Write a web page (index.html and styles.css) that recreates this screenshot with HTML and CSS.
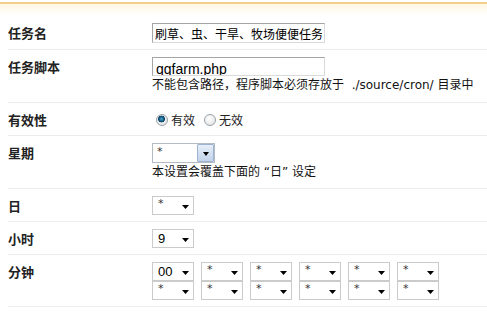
FILE: index.html
```html
<!DOCTYPE html>
<html lang="zh-CN">
<head>
  <meta charset="UTF-8">
  <title>编辑计划任务</title>
  <link rel="stylesheet" href="styles.css">
</head>
<body>

<div class="top"></div>

<form class="cron">
  <div class="row">
    <div class="label">任务名</div>
    <div class="field">
      <input class="text name" type="text" value="刷草、虫、干旱、牧场便便任务">
    </div>
  </div>

  <div class="row">
    <div class="label">任务脚本</div>
    <div class="field">
      <input class="text script" type="text" value="qqfarm.php">
      <div class="hint tall">不能包含路径，程序脚本必须存放于&nbsp; ./source/cron/ 目录中</div>
    </div>
  </div>

  <div class="row">
    <div class="label">有效性</div>
    <div class="field radios">
      <label class="radio"><input type="radio" name="available" checked>有效</label>
      <label class="radio"><input type="radio" name="available">无效</label>
    </div>
  </div>

  <div class="row">
    <div class="label">星期</div>
    <div class="field">
      <span class="combo">
        <select class="star"><option>*</option></select>
        <span class="drop"></span>
      </span>
      <div class="hint">本设置会覆盖下面的 “日” 设定</div>
    </div>
  </div>

  <div class="row">
    <div class="label">日</div>
    <div class="field">
      <select class="sel star"><option>*</option></select>
    </div>
  </div>

  <div class="row">
    <div class="label">小时</div>
    <div class="field">
      <select class="sel"><option>9</option></select>
    </div>
  </div>

  <div class="row">
    <div class="label">分钟</div>
    <div class="field minutes">
      <select class="sel"><option>00</option></select>
      <select class="sel star"><option>*</option></select>
      <select class="sel star"><option>*</option></select>
      <select class="sel star"><option>*</option></select>
      <select class="sel star"><option>*</option></select>
      <select class="sel star"><option>*</option></select>
      <select class="sel star"><option>*</option></select>
      <select class="sel star"><option>*</option></select>
      <select class="sel star"><option>*</option></select>
      <select class="sel star"><option>*</option></select>
      <select class="sel star"><option>*</option></select>
      <select class="sel star"><option>*</option></select>
    </div>
  </div>
</form>

</body>
</html>
```

FILE: styles.css
```css
body {
  margin: 0;
  font-family: "DejaVu Sans", "Noto Sans CJK SC", sans-serif;
  font-size: 12px;
  color: #222;
  background: #fff;
}
.top {
  margin-top: 2px;
  height: 12px;
  border-top: 2px solid #f2cf88;
  background: linear-gradient(#fff7e4, #fff);
}
.cron {
  margin: 0;
}
.row {
  display: flex;
  margin-left: 8px;
  padding: 7px 0 6px;
  border-bottom: 1px solid #ececec;
}
.label {
  width: 144px;
  flex: none;
  font-family: "Noto Sans CJK SC", sans-serif;
  font-weight: bold;
  font-size: 13px;
  line-height: 19px;
  color: #222;
}
.field {
  flex: 1;
}
.text {
  display: block;
  box-sizing: border-box;
  width: 173px;
  height: 20px;
  margin: 0;
  border: 1px solid;
  border-color: #a5a5a5 #dadada #dadada #a5a5a5;
  padding: 0 2px;
  font-family: "Noto Sans CJK SC", sans-serif;
  font-size: 12px;
  color: #000;
  outline: none;
}
.text.script {
  height: 19px;
  padding: 4px 3px 0;
  font-family: "Liberation Sans", sans-serif;
  font-size: 14px;
  line-height: 14px;
}
.hint {
  line-height: 19px;
  color: #111;
}
.hint.tall {
  margin-bottom: 1px;
}
.radios {
  display: flex;
  align-items: center;
  height: 19px;
  padding-left: 4px;
}
.radio {
  display: inline-flex;
  align-items: center;
  margin-right: 9px;
  color: #222;
}
.radio input {
  appearance: none;
  width: 12px;
  height: 12px;
  margin: 0 3px 0 0;
  border: 1px solid #9aa3ab;
  border-radius: 50%;
  background: radial-gradient(circle at 40% 35%, #fff, #dedede);
}
.radio input:checked {
  background:
    radial-gradient(circle at 45% 40%, #5fa9cf 0, #1d6a92 1.8px, #0d4463 3.2px, transparent 3.7px),
    radial-gradient(circle at 40% 35%, #fff, #dedede);
}
.sel {
  appearance: none;
  box-sizing: border-box;
  width: 42px;
  height: 19px;
  margin: 0;
  padding: 0 0 0 5px;
  border: 1px solid #cbcbcb;
  border-radius: 0;
  background: #fff url("data:image/svg+xml;utf8,<svg xmlns='http://www.w3.org/2000/svg' width='7' height='4'><path d='M0 0h7L3.5 4z' fill='%23000'/></svg>") no-repeat right 4px top 8px;
  font-family: "Liberation Sans", sans-serif;
  font-size: 13px;
  color: #000;
  outline: none;
}
.sel.star,
.combo .star {
  padding-bottom: 4px;
  font-family: "DejaVu Sans", sans-serif;
  font-size: 11px;
  color: #333;
}
.combo {
  display: flex;
  box-sizing: border-box;
  width: 63px;
  height: 20px;
  border: 1px solid #b3bcc6;
  background: #fff;
}
.combo select {
  appearance: none;
  flex: 1;
  min-width: 0;
  border: none;
  padding: 0 0 0 4px;
  background: transparent;
  font-family: "Liberation Sans", sans-serif;
  font-size: 13px;
  color: #000;
  outline: none;
}
.drop {
  display: flex;
  align-items: center;
  justify-content: center;
  width: 15px;
  border: 1px solid #9db3d1;
  border-radius: 1px;
  background: linear-gradient(#e6eef8, #c3d3ea);
}
.drop::after {
  content: "";
  margin-top: 2px;
  border-top: 4px solid #000;
  border-left: 3.5px solid transparent;
  border-right: 3.5px solid transparent;
}
.minutes {
  display: grid;
  grid-template-columns: repeat(6, 42px);
  column-gap: 7px;
}
```
